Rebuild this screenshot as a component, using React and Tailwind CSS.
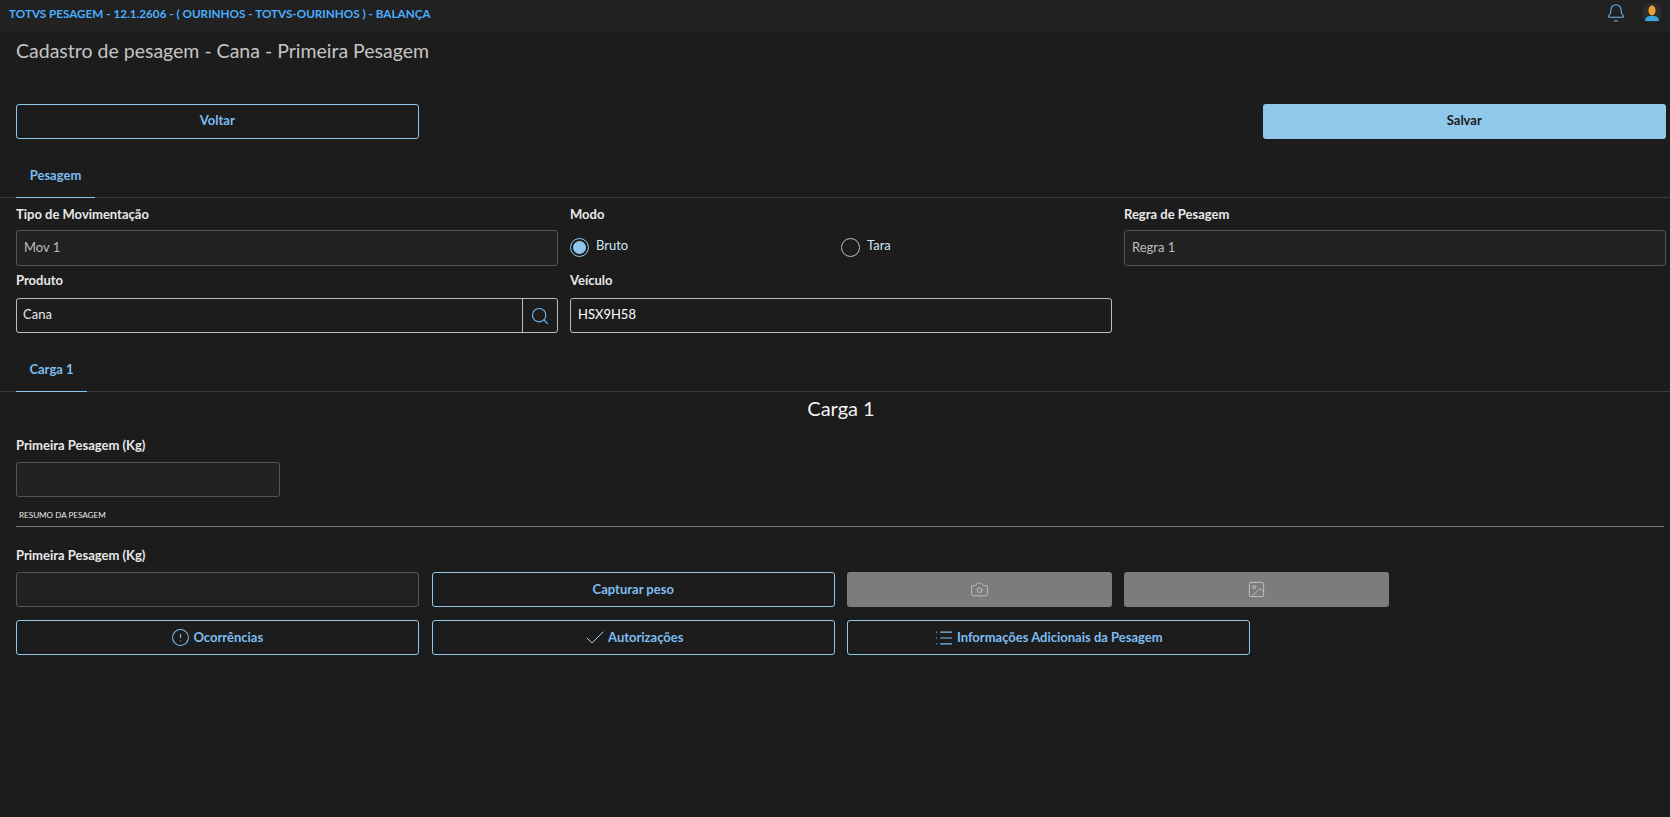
import React from 'react';
import { Bell, Search, Camera, Image, Check, CircleAlert, List } from 'lucide-react';

const font = "font-['Lato','Noto_Sans',sans-serif]";

function OutlineButton({ children, className = '' }) {
  return (
    <button className={`h-[35px] flex items-center justify-center gap-[3px] rounded-[3px] border border-[#90c8ec] text-[13px] font-bold text-[#7dbdf0] ${className}`}>
      {children}
    </button>
  );
}

function Label({ children }) {
  return <div className="h-[17px] leading-[17px] text-[13px] font-bold text-[#e8e8e8]">{children}</div>;
}

function DisabledInput({ value, className = '' }) {
  return (
    <div className={`flex items-center px-[7px] rounded-[3px] border border-[#555555] bg-[#212121] text-[13px] text-[#bdbdbd] ${className}`}>
      {value}
    </div>
  );
}

function Tab({ children, className = '' }) {
  return (
    <div className="border-b border-[#3a3a3a] px-4">
      <div className={`-mb-px h-[40px] pb-[4px] flex items-center justify-center border-b border-[#90c8ec] text-[13px] font-bold text-[#7dbdf0] ${className}`}>
        {children}
      </div>
    </div>
  );
}

function Radio({ label, checked }) {
  return (
    <div className="flex items-center gap-[7px]">
      <div className={`w-[19px] h-[19px] rounded-full border flex items-center justify-center ${checked ? 'border-[#90c8ec]' : 'border-[#bdbdbd]'}`}>
        {checked && <div className="w-[13px] h-[13px] rounded-full bg-[#90c8ec]" />}
      </div>
      <span className="text-[13px] text-[#cfe6f7] -mt-[3px]">{label}</span>
    </div>
  );
}

export default function App() {
  return (
    <div className={`${font} min-h-[817px] bg-[#1c1c1c] text-white`}>
      <div className="h-[32px] bg-[#212121] flex items-start justify-between pl-[9px] pr-[8px] pt-[3px]">
        <span className="text-[11.7px] leading-[20px] font-bold text-[#4aaeff]">TOTVS PESAGEM - 12.1.2606 - ( OURINHOS - TOTVS-OURINHOS ) - BALANÇA</span>
        <div className="flex items-center gap-[16px]">
          <Bell size={20} strokeWidth={1.3} className="text-[#6db6f2]" />
          <div className="w-[20px] h-[20px] rounded-full bg-[#2d2d2d] flex items-center justify-center">
            <svg width="14" height="16" viewBox="0 0 14 16">
              <path d="M0 16c0-3 2-4.500 4.500-5h5c2.500.5 4.500 2 4.500 5z" fill="#3aa7e0" />
              <ellipse cx="7" cy="5.500" rx="3.500" ry="5" fill="#f0a030" />
            </svg>
          </div>
        </div>
      </div>

      <h1 className="pl-4 pt-[5px] h-[72px] text-[19.5px] leading-[27px] text-[#c4c4c4]">Cadastro de pesagem - Cana - Primeira Pesagem</h1>

      <div className="grid grid-cols-12 gap-x-3 pl-4 pr-1 pb-[19px]">
        <OutlineButton className="col-span-3 mr-px pb-[2px]">Voltar</OutlineButton>
        <button className="col-start-10 col-span-3 h-[35px] pb-[2px] rounded-[3px] bg-[#90c8ec] text-[13px] font-bold text-[#1c1c1c]">Salvar</button>
      </div>

      <Tab className="w-[79px]">Pesagem</Tab>

      <div className="grid grid-cols-12 gap-x-3 pl-4 pr-1 pt-[8px]">
        <div className="col-span-4">
          <Label>Tipo de Movimentação</Label>
          <DisabledInput value="Mov 1" className="h-[36px] mt-[7px]" />
        </div>
        <div className="col-span-4">
          <Label>Modo</Label>
          <div className="grid grid-cols-2 h-[35px] mt-[7px] items-center">
            <Radio label="Bruto" checked />
            <Radio label="Tara" />
          </div>
        </div>
        <div className="col-span-4">
          <Label>Regra de Pesagem</Label>
          <DisabledInput value="Regra 1" className="h-[36px] mt-[7px]" />
        </div>
        <div className="col-span-4 mt-[6px]">
          <Label>Produto</Label>
          <div className="mt-[9px] h-[35px] flex rounded-[3px] border border-[#bdbdbd] text-[13px]">
            <div className="flex-1 pb-[2px] flex items-center px-[6px] border-r border-[#bdbdbd] text-[#e8e8e8]">Cana</div>
            <div className="w-[34px] flex items-center justify-center">
              <Search size={20} strokeWidth={1.4} className="text-[#6db6f2]" />
            </div>
          </div>
        </div>
        <div className="col-span-4 mt-[6px]">
          <Label>Veículo</Label>
          <div className="mt-[9px] h-[35px] pb-[2px] flex items-center px-[7px] rounded-[3px] border border-[#bdbdbd] text-[13px] text-white">HSX9H58</div>
        </div>
      </div>

      <div className="pt-[19px]">
        <Tab className="w-[71px]">Carga 1</Tab>
      </div>

      <div className="pl-4 pr-1 text-center text-[20px] leading-[24px] text-[#f2f2f2] pt-[4px]">Carga 1</div>

      <div className="pl-4 pr-1 pt-[17px]">
        <Label>Primeira Pesagem (Kg)</Label>
        <div className="grid grid-cols-12 gap-x-3 mt-[8px]">
          <DisabledInput value="" className="col-span-2 h-[35px] mr-px" />
        </div>
        <div className="mt-[12px] pl-[3px] text-[8.1px] leading-[12px] text-[#e8e8e8]">RESUMO DA PESAGEM</div>
        <div className="mt-[5px] mr-[2px] border-t border-[#777777]" />
        <div className="mt-[20px]"><Label>Primeira Pesagem (Kg)</Label></div>
        <div className="grid grid-cols-12 gap-x-3 gap-y-[13px] mt-[8px]">
          <DisabledInput value="" className="col-span-3 h-[35px] mr-px" />
          <OutlineButton className="col-span-3">Capturar peso</OutlineButton>
          <div className="col-span-2 h-[35px] rounded-[3px] bg-[#7c7c7c] flex items-center justify-center">
            <Camera size={19} strokeWidth={1.1} className="text-[#c4c4c4]" />
          </div>
          <div className="col-span-2 h-[35px] rounded-[3px] bg-[#7c7c7c] flex items-center justify-center">
            <Image size={19} strokeWidth={1.2} className="text-[#c4c4c4]" />
          </div>
          <div className="col-span-2" />
          <OutlineButton className="col-span-3 mr-px"><CircleAlert size={19} strokeWidth={1.3} />Ocorrências</OutlineButton>
          <OutlineButton className="col-span-3"><Check size={24} strokeWidth={1} className="text-[#a9d4f2] -mr-[2px]" />Autorizações</OutlineButton>
          <OutlineButton className="col-span-3 mr-px"><List size={20} strokeWidth={1.4} />Informações Adicionais da Pesagem</OutlineButton>
        </div>
      </div>
    </div>
  );
}
